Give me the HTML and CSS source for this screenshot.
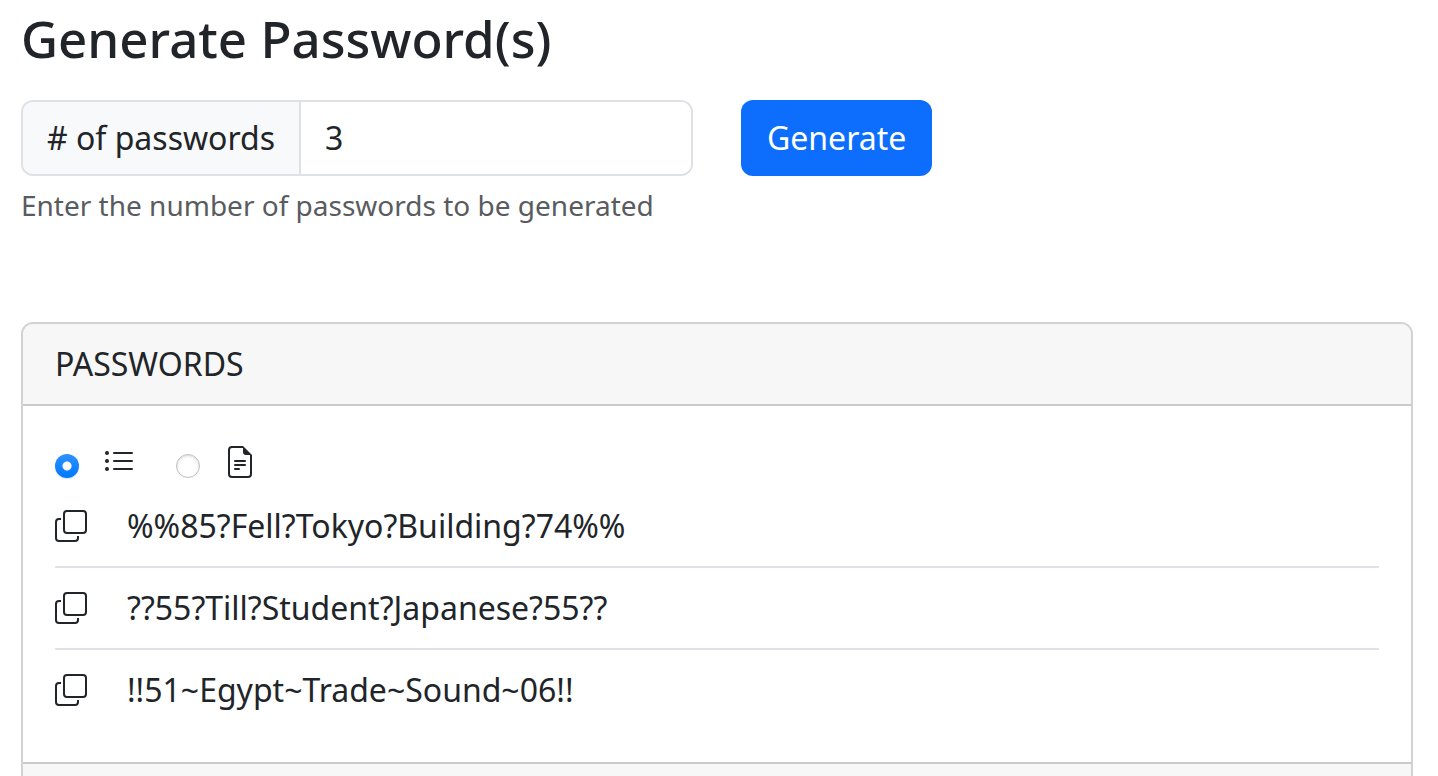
FILE: index.html
```html
<!DOCTYPE html>
<html lang="en">
<head>
<meta charset="utf-8">
<title>Generate Password(s)</title>
<link rel="stylesheet" href="styles.css">
</head>
<body>
<svg class="sprite" aria-hidden="true">
  <symbol id="copy" viewBox="0 0 16 16"><path fill-rule="evenodd" d="M4 2a2 2 0 0 1 2-2h8a2 2 0 0 1 2 2v8a2 2 0 0 1-2 2H6a2 2 0 0 1-2-2zm2-1a1 1 0 0 0-1 1v8a1 1 0 0 0 1 1h8a1 1 0 0 0 1-1V2a1 1 0 0 0-1-1zM2 5a1 1 0 0 0-1 1v8a1 1 0 0 0 1 1h8a1 1 0 0 0 1-1v-1h1v1a2 2 0 0 1-2 2H2a2 2 0 0 1-2-2V6a2 2 0 0 1 2-2h1v1z"/></symbol>
</svg>
<main class="page">
  <h1 class="title">Generate Password(s)</h1>
  <form class="generator">
    <div class="field">
      <div class="input-group">
        <label class="input-label" for="amount"># of passwords</label>
        <input class="input" id="amount" type="text" inputmode="numeric" value="3" aria-describedby="amount-help">
      </div>
      <p class="help" id="amount-help">Enter the number of passwords to be generated</p>
    </div>
    <button class="generate" type="button">Generate</button>
  </form>
  <section class="card">
    <h2 class="card-header">PASSWORDS</h2>
    <div class="card-body">
      <div class="views">
        <input class="radio" type="radio" name="view" id="view-list" checked>
        <label class="view-label" for="view-list" aria-label="List">
          <svg class="icon" viewBox="0 0 16 16"><path fill-rule="evenodd" d="M5 11.5a.5.5 0 0 1 .5-.5h9a.5.5 0 0 1 0 1h-9a.5.5 0 0 1-.5-.5m0-4a.5.5 0 0 1 .5-.5h9a.5.5 0 0 1 0 1h-9a.5.5 0 0 1-.5-.5m0-4a.5.5 0 0 1 .5-.5h9a.5.5 0 0 1 0 1h-9a.5.5 0 0 1-.5-.5m-3 1a1 1 0 1 0 0-2 1 1 0 0 0 0 2m0 4a1 1 0 1 0 0-2 1 1 0 0 0 0 2m0 4a1 1 0 1 0 0-2 1 1 0 0 0 0 2"/></svg>
        </label>
        <input class="radio" type="radio" name="view" id="view-text">
        <label class="view-label" for="view-text" aria-label="Text">
          <svg class="icon" viewBox="0 0 16 16"><path d="M5.500 7a.5.5 0 0 0 0 1h5a.5.5 0 0 0 0-1zM5 9.500a.5.5 0 0 1 .5-.5h5a.5.5 0 0 1 0 1h-5a.5.5 0 0 1-.5-.5m0 2a.5.5 0 0 1 .5-.5h2a.5.5 0 0 1 0 1h-2a.5.5 0 0 1-.5-.5"/><path d="M4 0h5.500v1H4a1 1 0 0 0-1 1v12a1 1 0 0 0 1 1h8a1 1 0 0 0 1-1V4.500h1V14a2 2 0 0 1-2 2H4a2 2 0 0 1-2-2V2a2 2 0 0 1 2-2"/><path d="M9.500 3V0L14 4.500h-3A1.500 1.500 0 0 1 9.500 3"/></svg>
        </label>
      </div>
      <ul class="passwords">
        <li class="password"><button class="copy" type="button" aria-label="Copy"><svg class="icon"><use href="#copy"/></svg></button><span>%%85?Fell?Tokyo?Building?74%%</span></li>
        <li class="password"><button class="copy" type="button" aria-label="Copy"><svg class="icon"><use href="#copy"/></svg></button><span>??55?Till?Student?Japanese?55??</span></li>
        <li class="password"><button class="copy" type="button" aria-label="Copy"><svg class="icon"><use href="#copy"/></svg></button><span>!!51~Egypt~Trade~Sound~06!!</span></li>
      </ul>
    </div>
    <div class="card-footer"></div>
  </section>
</main>
</body>
</html>
```
FILE: styles.css
```css
* { box-sizing: border-box; }
html { overflow: hidden; }
body {
  margin: 0;
  background: #fff;
  color: #212529;
  font: 32px/48px "Noto Sans", sans-serif;
}
.sprite { position: absolute; width: 0; height: 0; }
.page { padding: 8px 25px 0 21px; }
.title { margin: 0 0 32px; font-size: 51px; line-height: 60px; font-weight: 500; }
.generator { display: flex; align-items: flex-start; gap: 48px; margin-bottom: 96px; }
.field { flex: 0 1 672px; min-width: 0; }
.input-group { display: flex; border: 2px solid #dee2e6; border-radius: 12px; overflow: hidden; }
.input-label { padding: 12px 24px; background: #f8f9fa; border-right: 2px solid #dee2e6; white-space: nowrap; }
.input { flex: 1; min-width: 0; padding: 12px 24px; border: 0; outline: 0; background: #fff; color: inherit; font: inherit; }
.help { margin: 8px 0 0; color: #595c5f; font-size: 28px; line-height: 42px; }
.generate { padding: 14px 26px; border: 0; border-radius: 12px; background: #0d6efd; color: #fff; font: inherit; }
.card { border: 2px solid #d2d2d2; border-radius: 12px; overflow: hidden; }
.card-header { margin: 0; padding: 16px 32px; border-bottom: 2px solid #cbcbcb; background: #f7f7f7; font: inherit; }
.card-body { padding: 32px; }
.views { display: flex; align-items: center; height: 48px; }
.radio {
  appearance: none;
  width: 24px;
  height: 24px;
  margin: 8px 24px 0 0;
  border: 1px solid #c0c0c0;
  border-radius: 50%;
  background: #fff;
  box-shadow: inset 0 1px 3px #d8d8d8;
}
.radio:checked {
  border: 0;
  background: radial-gradient(circle, #fff 4px, transparent 5px), linear-gradient(#2e92ff, #0077ff);
  box-shadow: 0 1px 1px #cfe4ff;
}
.view-label { display: flex; margin-right: 41px; }
.icon { display: block; width: 32px; height: 32px; fill: currentColor; }
.passwords { margin: 0; padding: 0; list-style: none; }
.password { display: flex; align-items: center; gap: 40px; padding: 16px 0; border-bottom: 2px solid #dee2e6; }
.password:last-child { border-bottom: 0; }
.copy { padding: 0; border: 0; background: none; color: inherit; }
.card-footer { height: 80px; border-top: 2px solid #cbcbcb; background: #f7f7f7; }
```
